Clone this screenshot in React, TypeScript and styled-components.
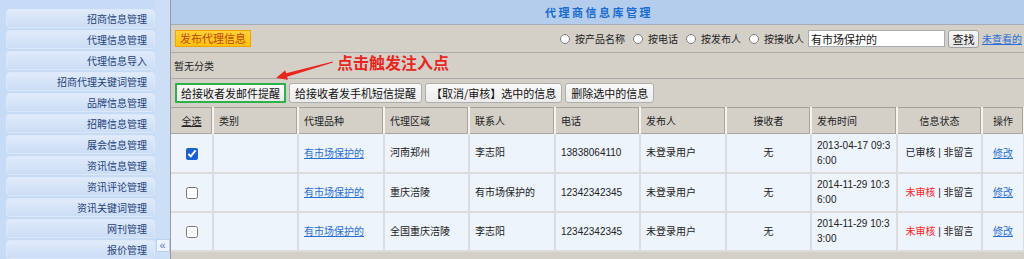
import React from 'react';
import styled, { createGlobalStyle } from 'styled-components';

const GlobalStyle = createGlobalStyle`
  html, body {
    margin: 0;
    padding: 0;
  }
  body {
    font-family: 'Liberation Sans', 'Noto Sans CJK SC', sans-serif;
    font-size: 10px;
    color: #222;
    background: #d4d0c8;
  }
`;

const menuItems = [
  '招商信息管理',
  '代理信息管理',
  '代理信息导入',
  '招商代理关键词管理',
  '品牌信息管理',
  '招聘信息管理',
  '展会信息管理',
  '资讯信息管理',
  '资讯评论管理',
  '资讯关键词管理',
  '网刊管理',
  '报价管理',
];

type Align = 'left' | 'center';

const columns: { title: string; width: number; align: Align; underline?: boolean }[] = [
  { title: '全选', width: 42, align: 'center', underline: true },
  { title: '类别', width: 85, align: 'left' },
  { title: '代理品种', width: 86, align: 'left' },
  { title: '代理区域', width: 85, align: 'left' },
  { title: '联系人', width: 86, align: 'left' },
  { title: '电话', width: 85, align: 'left' },
  { title: '发布人', width: 86, align: 'left' },
  { title: '接收者', width: 85, align: 'center' },
  { title: '发布时间', width: 86, align: 'left' },
  { title: '信息状态', width: 85, align: 'center' },
  { title: '操作', width: 42, align: 'center' },
];

const rows = [
  { checked: true, area: '河南郑州', contact: '李志阳', phone: '13838064110', time: '2013-04-17 09:36:00', reviewed: true },
  { checked: false, area: '重庆涪陵', contact: '有市场保护的', phone: '12342342345', time: '2014-11-29 10:36:00', reviewed: false },
  { checked: false, area: '全国重庆涪陵', contact: '李志阳', phone: '12342342345', time: '2014-11-29 10:33:00', reviewed: false },
];

export default function App() {
  return (
    <>
      <GlobalStyle />
      <Page>
        <Sidebar>
          {menuItems.map((item) => (
            <MenuItem key={item}>{item}</MenuItem>
          ))}
        </Sidebar>
        <CollapseRail>
          <CollapseButton>«</CollapseButton>
        </CollapseRail>
        <Main>
          <TitleBar>代理商信息库管理</TitleBar>
          <Toolbar>
            <PublishButton>发布代理信息</PublishButton>
            <SearchGroup>
              <RadioOption>
                <Radio type="radio" name="by" />按产品名称
              </RadioOption>
              <RadioOption>
                <Radio type="radio" name="by" />按电话
              </RadioOption>
              <RadioOption>
                <Radio type="radio" name="by" />按发布人
              </RadioOption>
              <RadioOption>
                <Radio type="radio" name="by" />按接收人
              </RadioOption>
              <SearchInput defaultValue="有市场保护的" />
              <SearchButton>查找</SearchButton>
              <Link>未查看的</Link>
            </SearchGroup>
          </Toolbar>
          <CategoryRow>暂无分类</CategoryRow>
          <ActionRow>
            <ActionButton $highlight>给接收者发邮件提醒</ActionButton>
            <ActionButton>给接收者发手机短信提醒</ActionButton>
            <ActionButton>【取消/审核】选中的信息</ActionButton>
            <ActionButton>删除选中的信息</ActionButton>
          </ActionRow>
          <Table>
            <colgroup>
              {columns.map((c) => (
                <col key={c.title} style={{ width: c.width }} />
              ))}
            </colgroup>
            <thead>
              <tr>
                {columns.map((c) => (
                  <HeadCell key={c.title} $align={c.align} $underline={c.underline}>
                    {c.title}
                  </HeadCell>
                ))}
              </tr>
            </thead>
            <tbody>
              {rows.map((r, i) => (
                <tr key={i}>
                  <Cell $align="center">
                    <Check type="checkbox" defaultChecked={r.checked} />
                  </Cell>
                  <Cell $align="left" />
                  <Cell $align="left">
                    <Link>有市场保护的</Link>
                  </Cell>
                  <Cell $align="left">{r.area}</Cell>
                  <Cell $align="left">{r.contact}</Cell>
                  <Cell $align="left">{r.phone}</Cell>
                  <Cell $align="left">未登录用户</Cell>
                  <Cell $align="center">无</Cell>
                  <DateCell $align="left">{r.time}</DateCell>
                  <Cell $align="center">
                    <Status $reviewed={r.reviewed}>{r.reviewed ? '已审核' : '未审核'}</Status> | 非留言
                  </Cell>
                  <Cell $align="center">
                    <Link>修改</Link>
                  </Cell>
                </tr>
              ))}
            </tbody>
          </Table>

          <Callout>点击触发注入点</Callout>
          <Arrow width="70" height="28" viewBox="0 0 70 28">
            <polygon
              points="62.86,6.52 16.11,18.27 15.25,15.2 6,23 17.95,24.8 17.09,21.73 63.14,7.48"
              fill="#e8261f"
            />
          </Arrow>
        </Main>
      </Page>
    </>
  );
}

const Page = styled.div`
  display: flex;
  height: 259px;
  overflow: hidden;
`;

const Sidebar = styled.nav`
  width: 149px;
  flex-shrink: 0;
  display: flex;
  flex-direction: column;
  gap: 2px;
  padding: 9px 0 0 6px;
  background: #c6dbf5;
`;

const MenuItem = styled.div`
  flex-shrink: 0;
  height: 19px;
  box-sizing: border-box;
  padding-right: 7px;
  border: 1px solid #dce8f9;
  border-radius: 3px;
  background: linear-gradient(#e0ebfb, #cbddf5);
  color: #23407a;
  font-family: 'Noto Sans CJK SC', sans-serif;
  font-size: 10px;
  line-height: 17px;
  text-align: right;
`;

const CollapseRail = styled.div`
  width: 15px;
  flex-shrink: 0;
  display: flex;
  flex-direction: column;
  justify-content: flex-end;
  align-items: center;
  padding-bottom: 7px;
  box-sizing: border-box;
  background: #cddff7;
`;

const CollapseButton = styled.div`
  width: 14px;
  height: 13px;
  box-sizing: border-box;
  border: 1px solid #bcd1ee;
  background: #eef4fd;
  color: #5878b8;
  font-size: 11px;
  line-height: 10px;
  text-align: center;
`;

const Main = styled.main`
  position: relative;
  flex: 1;
  display: flex;
  flex-direction: column;
  border-left: 1px solid #9a9a9a;
  background: #d4d0c8;
`;

const TitleBar = styled.div`
  height: 24px;
  flex-shrink: 0;
  border-bottom: 1px solid #a3acb8;
  background: #b4cdec;
  color: #1a6bd0;
  font-family: 'Noto Sans CJK SC', sans-serif;
  font-size: 11px;
  font-weight: bold;
  letter-spacing: 2.5px;
  line-height: 24px;
  text-align: center;
  padding-left: 2px;
`;

const Toolbar = styled.div`
  height: 28px;
  flex-shrink: 0;
  box-sizing: border-box;
  display: flex;
  align-items: center;
  justify-content: space-between;
  padding: 0 3px 0 4px;
  border-bottom: 1px solid #a9a9a9;
`;

const PublishButton = styled.div`
  height: 17px;
  box-sizing: border-box;
  padding: 0 4px;
  border: 1px solid #efa400;
  background: linear-gradient(#ffd23a, #ffc20e);
  color: #c04600;
  font-family: 'Noto Sans CJK SC', sans-serif;
  font-size: 11px;
  line-height: 15px;
`;

const SearchGroup = styled.div`
  display: flex;
  align-items: center;
`;

const RadioOption = styled.label`
  display: flex;
  align-items: center;
  gap: 5px;
  margin-right: 8px;
  color: #222;
  font-family: 'Noto Sans CJK SC', sans-serif;
  font-size: 10px;

  &:last-of-type {
    margin-right: 4px;
  }
`;

const Radio = styled.input`
  width: 10px;
  height: 10px;
  margin: 0;
`;

const SearchInput = styled.input`
  width: 137px;
  height: 17px;
  box-sizing: border-box;
  margin: 0 3px 0 0;
  padding: 0 2px;
  border: 1px solid #a7adb5;
  background: #fff;
  color: #111;
  font-family: 'Noto Sans CJK SC', sans-serif;
  font-size: 11px;
  outline: none;
`;

const SearchButton = styled.button`
  width: 31px;
  height: 18px;
  margin-right: 3px;
  padding: 0;
  border: 1px solid #a3a3a3;
  border-radius: 3px;
  background: linear-gradient(#f8f8f8, #e4e4e4);
  color: #111;
  font-family: 'Noto Sans CJK SC', sans-serif;
  font-size: 11px;
  line-height: 16px;
`;

const Link = styled.a`
  color: #2a6fd6;
  text-decoration: underline;
  font-family: 'Noto Sans CJK SC', sans-serif;
  font-size: 10px;
  cursor: pointer;
`;

const CategoryRow = styled.div`
  height: 26px;
  flex-shrink: 0;
  box-sizing: border-box;
  display: flex;
  align-items: center;
  padding-left: 3px;
  border-bottom: 1px solid #a9a9a9;
  font-family: 'Noto Sans CJK SC', sans-serif;
  font-size: 10px;
  color: #222;
`;

const ActionRow = styled.div`
  height: 28px;
  flex-shrink: 0;
  box-sizing: border-box;
  display: flex;
  align-items: center;
  gap: 3px;
  padding: 0 0 1px 4px;
`;

const ActionButton = styled.button<{ $highlight?: boolean }>`
  height: 20px;
  margin: 0;
  padding: 0 ${(p) => (p.$highlight ? '4px' : '5px')};
  border: ${(p) => (p.$highlight ? '2px solid #2db24a' : '1px solid #aeaeae')};
  border-radius: ${(p) => (p.$highlight ? '1px' : '3px')};
  background: linear-gradient(#fafafa, #ebebeb);
  color: #111;
  font-family: 'Noto Sans CJK SC', sans-serif;
  font-size: 11px;
  line-height: 16px;
  white-space: nowrap;
`;

const Table = styled.table`
  width: 853px;
  table-layout: fixed;
  border-collapse: collapse;
  border-top: 1px solid #a5a19a;
`;

const HeadCell = styled.th<{ $align: Align; $underline?: boolean }>`
  height: 26px;
  box-sizing: border-box;
  padding: 0 5px;
  border-right: 2px solid #f4f3f0;
  border-bottom: 1px solid #aaa69f;
  box-shadow: inset -1px 0 0 #a9a59e;
  background: #d4d0c8;
  color: #222;
  font-family: 'Noto Sans CJK SC', sans-serif;
  font-size: 10px;
  font-weight: normal;
  text-align: ${(p) => p.$align};
  text-decoration: ${(p) => (p.$underline ? 'underline' : 'none')};
`;

const Cell = styled.td<{ $align: Align }>`
  height: 39px;
  box-sizing: border-box;
  padding: 0 5px;
  border-right: 2px solid #dcdcdc;
  border-bottom: 2px solid #dcdcdc;
  background: #eef4fc;
  color: #222;
  font-family: 'Liberation Sans', 'Noto Sans CJK SC', sans-serif;
  font-size: 10px;
  line-height: 15px;
  text-align: ${(p) => p.$align};
  vertical-align: middle;
`;

const DateCell = styled(Cell)`
  word-break: break-all;
`;

const Status = styled.span<{ $reviewed: boolean }>`
  color: ${(p) => (p.$reviewed ? '#222' : '#ff1e1e')};
`;

const Check = styled.input`
  width: 12px;
  height: 12px;
  margin: 0;
  vertical-align: middle;
  accent-color: #1a62d4;
`;

const Callout = styled.div`
  position: absolute;
  left: 166px;
  top: 53px;
  color: #e8261f;
  font-family: 'Noto Sans CJK SC', sans-serif;
  font-size: 16px;
  font-weight: bold;
  line-height: 18px;
  white-space: nowrap;
`;

const Arrow = styled.svg`
  position: absolute;
  left: 99px;
  top: 55px;
`;
